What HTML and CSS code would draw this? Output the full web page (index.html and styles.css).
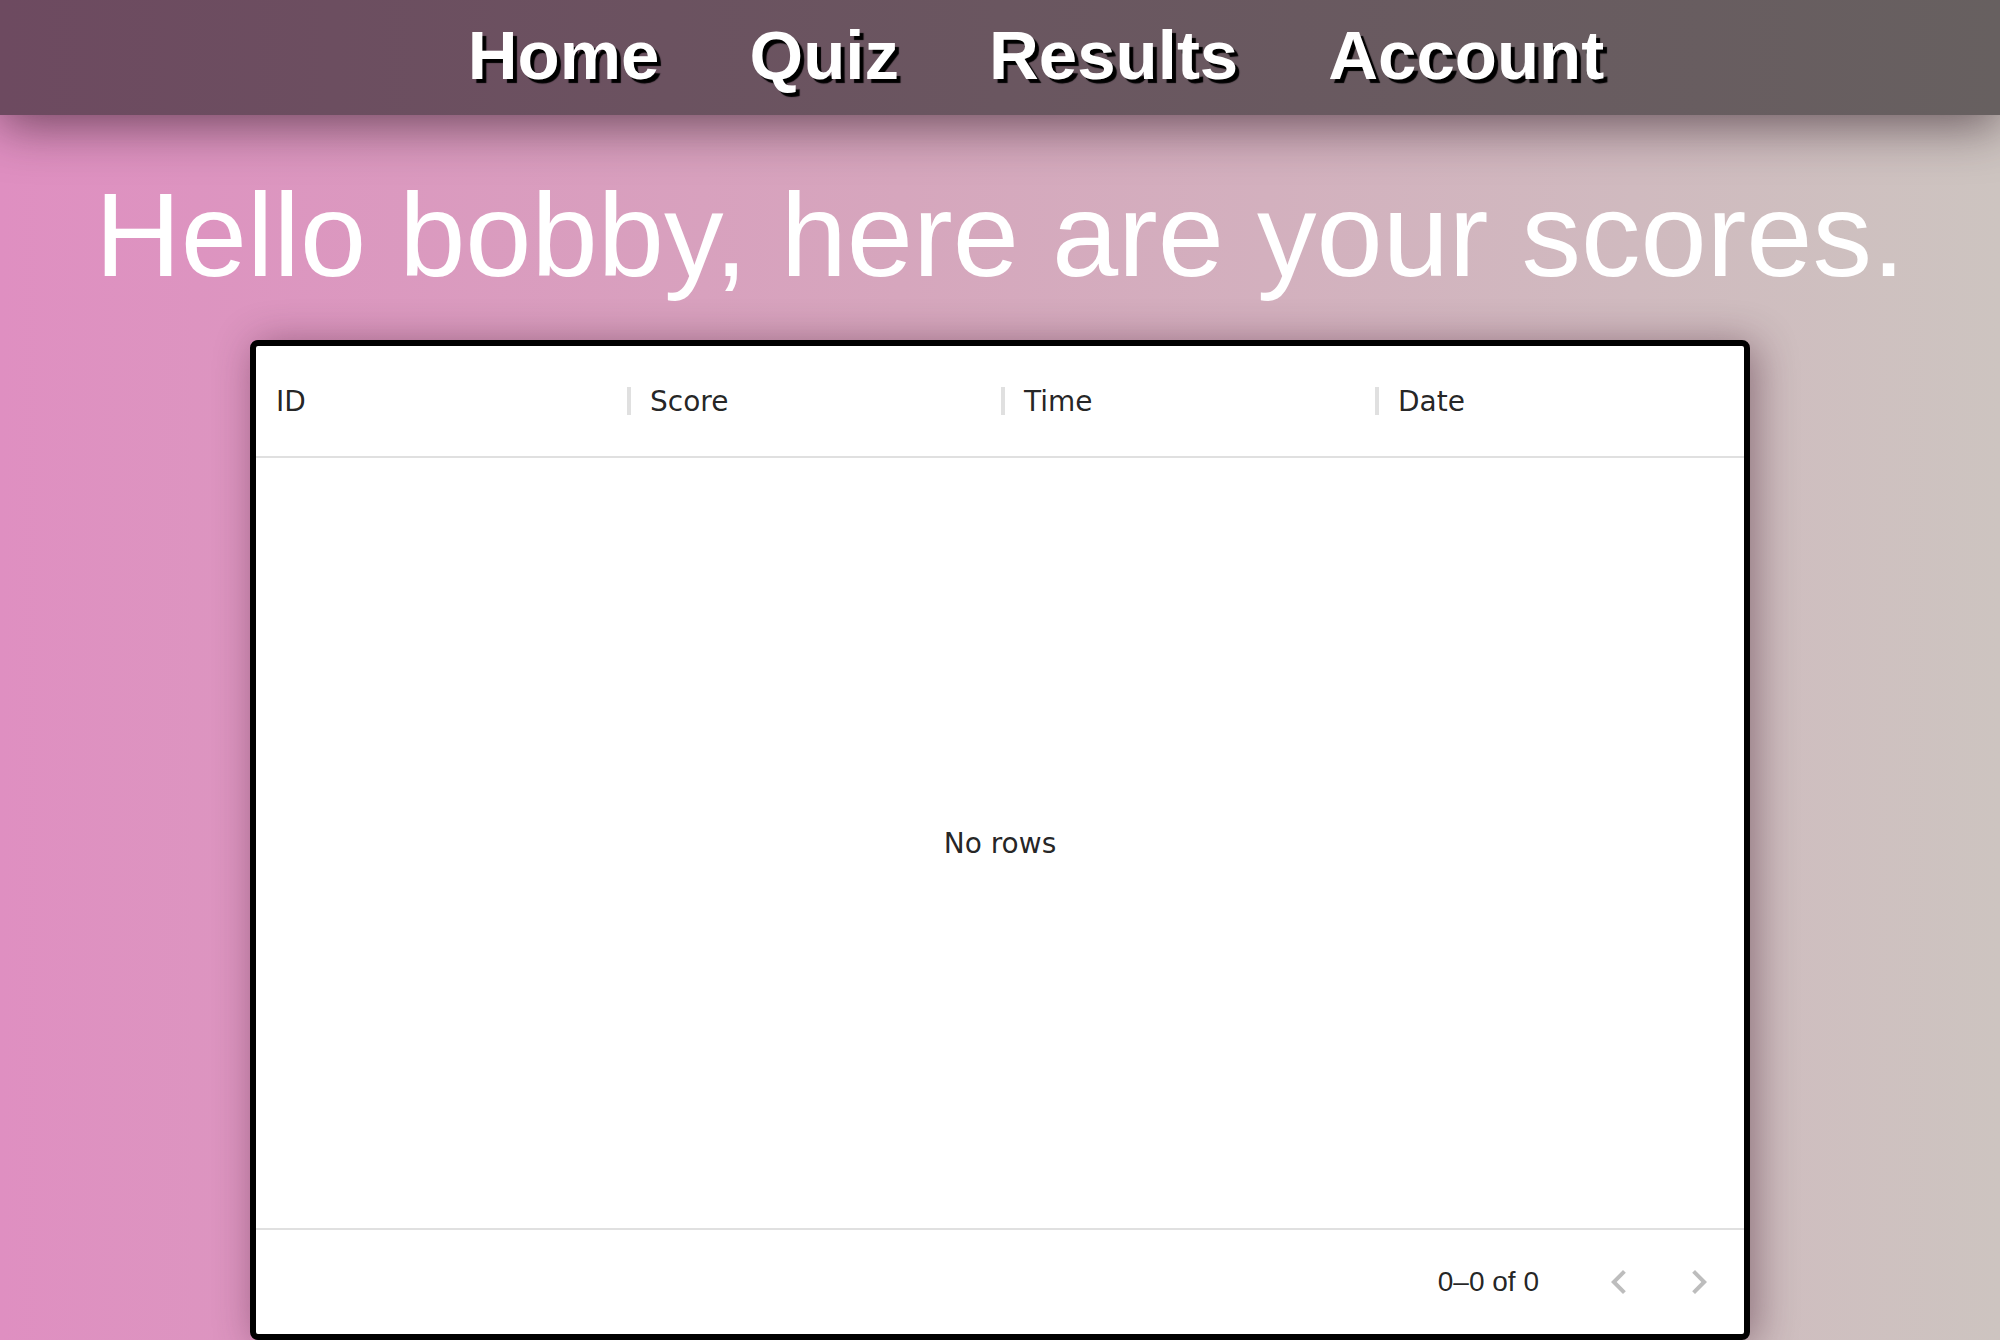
FILE: index.html
```html
<!DOCTYPE html>
<html lang="en">
<head>
<meta charset="utf-8">
<title>Results</title>
<link rel="stylesheet" href="styles.css">
</head>
<body>
<nav class="topnav">
  <ul class="nav-list">
    <li><a class="nav-link" href="#">Home</a></li>
    <li><a class="nav-link" href="#">Quiz</a></li>
    <li><a class="nav-link" href="#">Results</a></li>
    <li><a class="nav-link" href="#">Account</a></li>
  </ul>
</nav>
<main class="page">
  <h1 class="greeting">Hello bobby, here are your scores.</h1>
  <section class="grid">
    <div class="grid-header">
      <div class="col"><span class="col-title">ID</span><span class="col-sep"></span></div>
      <div class="col"><span class="col-title">Score</span><span class="col-sep"></span></div>
      <div class="col"><span class="col-title">Time</span><span class="col-sep"></span></div>
      <div class="col"><span class="col-title">Date</span></div>
    </div>
    <div class="grid-body">
      <span class="empty">No rows</span>
    </div>
    <div class="grid-footer">
      <span class="page-info">0–0 of 0</span>
      <div class="page-actions">
        <button class="icon-btn" disabled aria-label="previous page">
          <svg viewBox="0 0 24 24" width="48" height="48"><path d="M15.41 7.41 14 6l-6 6 6 6 1.41-1.41L10.83 12z"/></svg>
        </button>
        <button class="icon-btn" disabled aria-label="next page">
          <svg viewBox="0 0 24 24" width="48" height="48"><path d="M10 6 8.59 7.41 13.17 12l-4.58 4.59L10 18l6-6z"/></svg>
        </button>
      </div>
    </div>
  </section>
</main>
</body>
</html>
```

FILE: styles.css
```css
html, body {
  margin: 0;
  padding: 0;
  height: 100%;
  overflow: hidden;
}

body {
  background: linear-gradient(to right, #df8fc1 0%, #d6a6bd 45%, #cdc4c0 100%);
  font-family: "Liberation Sans", Arial, sans-serif;
}

.topnav {
  position: relative;
  z-index: 2;
  height: 115px;
  background: linear-gradient(to right, #6d4a60 0%, #6a5660 50%, #676060 100%);
  box-shadow: 0 10px 50px rgba(40, 20, 30, 0.6);
}

.nav-list {
  list-style: none;
  margin: 0;
  padding: 0 0 0 72px;
  height: 100%;
  display: flex;
  justify-content: center;
  gap: 90px;
}

.nav-link {
  display: block;
  font-family: "Liberation Sans", Arial, sans-serif;
  font-weight: 700;
  font-size: 69px;
  line-height: 112px;
  color: #fff;
  text-decoration: none;
  text-shadow: 4px 4px 1px #000;
}

.page {
  display: flex;
  flex-direction: column;
  align-items: center;
}

.greeting {
  margin: 50px 0 35px;
  font-family: "Liberation Sans", Arial, sans-serif;
  font-weight: 400;
  font-size: 119px;
  line-height: 140px;
  color: #fff;
  text-align: center;
  white-space: nowrap;
}

.grid {
  box-sizing: border-box;
  width: 1500px;
  height: 1000px;
  border: 6px solid #000;
  border-radius: 8px;
  background: #fff;
  box-shadow: 6px 4px 40px rgba(60, 20, 40, 0.45);
  display: flex;
  flex-direction: column;
  overflow: hidden;
  font-family: "DejaVu Sans", Verdana, sans-serif;
  color: rgba(0, 0, 0, 0.87);
}

.grid-header {
  flex: 0 0 auto;
  height: 110px;
  border-bottom: 2px solid #e0e0e0;
  display: flex;
  overflow: hidden;
}

.col {
  flex: 0 0 374px;
  box-sizing: border-box;
  padding: 0 20px;
  position: relative;
  display: flex;
  align-items: center;
}

.col-title {
  font-size: 28px;
  white-space: nowrap;
}

.col-sep {
  position: absolute;
  right: -1px;
  top: 41px;
  width: 4px;
  height: 28px;
  background: #e0e0e0;
}

.grid-body {
  flex: 1 1 auto;
  display: flex;
  align-items: center;
  justify-content: center;
}

.empty {
  font-size: 28px;
}

.grid-footer {
  flex: 0 0 auto;
  height: 104px;
  border-top: 2px solid #e0e0e0;
  display: flex;
  align-items: center;
  justify-content: flex-end;
  padding-right: 5px;
}

.page-info {
  font-family: "Liberation Sans", Arial, sans-serif;
  font-size: 28px;
  color: rgba(0, 0, 0, 0.87);
}

.page-actions {
  display: flex;
  margin-left: 40px;
}

.icon-btn {
  width: 80px;
  height: 80px;
  padding: 16px;
  border: 0;
  background: transparent;
  display: flex;
  align-items: center;
  justify-content: center;
}

.icon-btn svg {
  display: block;
  fill: #bdbdbd;
}
```
